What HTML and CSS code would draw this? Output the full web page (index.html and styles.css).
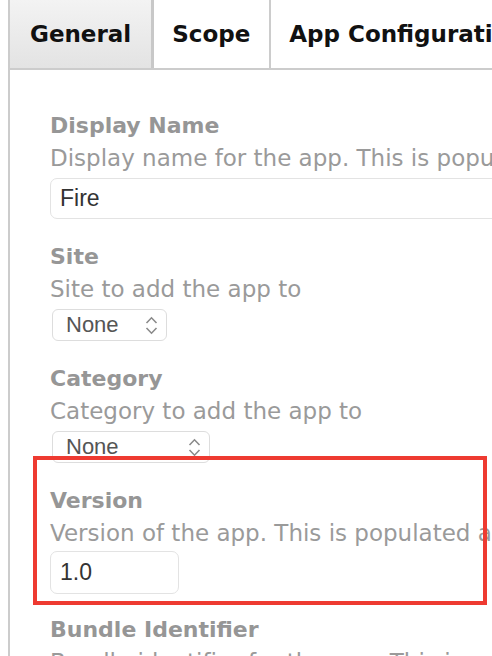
FILE: index.html
```html
<!DOCTYPE html>
<html lang="en">

  <head>
    <meta charset="UTF-8">
    <meta name="viewport" content="width=device-width, initial-scale=1.0">
    <title>App Settings</title>
    <link rel="stylesheet" href="styles.css">
  </head>

  <body>
    <div class="panel">
      <div class="tabs">
        <div class="tab active">General</div>
        <div class="tab">Scope</div>
        <div class="tab">App Configuration</div>
      </div>

      <div class="form">
        <div class="field">
          <div class="label">Display Name</div>
          <div class="help">Display name for the app. This is populated automatically from the package.</div>
          <div class="input wide">Fire</div>
        </div>

        <div class="field">
          <div class="label">Site</div>
          <div class="help">Site to add the app to</div>
          <div class="select site">
            <span>None</span>
            <svg width="13" height="19" viewBox="0 0 13 19"><path d="M1.5 7 L6.5 1.8 L11.5 7 M1.5 12 L6.5 17.2 L11.5 12" fill="none" stroke="#8a8a8a" stroke-width="1.6"/></svg>
          </div>
        </div>

        <div class="field">
          <div class="label">Category</div>
          <div class="help">Category to add the app to</div>
          <div class="select category">
            <span>None</span>
            <svg width="13" height="19" viewBox="0 0 13 19"><path d="M1.5 7 L6.5 1.8 L11.5 7 M1.5 12 L6.5 17.2 L11.5 12" fill="none" stroke="#8a8a8a" stroke-width="1.6"/></svg>
          </div>
        </div>

        <div class="field marked">
          <div class="highlight"></div>
          <div class="label">Version</div>
          <div class="help">Version of the app. This is populated automatically from the package.</div>
          <div class="input short">1.0</div>
        </div>

        <div class="field">
          <div class="label">Bundle Identifier</div>
          <div class="help">Bundle identifier for the app. This is populated automatically from the package.</div>
        </div>
      </div>
    </div>
  </body>

</html>
```

FILE: styles.css
```css
html,
body {
  margin: 0;
  overflow: hidden;
  background: #ffffff;
}

body {
  font-family: "DejaVu Sans", Verdana, sans-serif;
}

.panel {
  margin-left: 8px;
  border-left: 2px solid #cccccc;
  min-height: 656px;
}

.tabs {
  display: flex;
  height: 68px;
  border-bottom: 2px solid #cccccc;
  white-space: nowrap;
}

.tab {
  display: flex;
  align-items: center;
  padding: 0 19px 0 18px;
  font-size: 23px;
  font-weight: bold;
  color: #111111;
  border-right: 2px solid #cccccc;
}

.tab.active {
  padding: 0 20px;
  background: linear-gradient(#f3f3f3, #e3e3e3);
  border-right: 3px solid #c8c8c8;
}

.form {
  padding: 40px 0 0 40px;
}

.field {
  margin-bottom: 22px;
  white-space: nowrap;
}

.field.marked {
  position: relative;
  margin-bottom: 20px;
}

.highlight {
  position: absolute;
  left: -17px;
  top: -29px;
  width: 454px;
  bottom: -11px;
  border: 4px solid #ee3a31;
  box-sizing: border-box;
}

.label {
  font-size: 22px;
  line-height: 32px;
  font-weight: bold;
  color: #969696;
}

.help {
  font-size: 23px;
  line-height: 32px;
  color: #9a9a9a;
}

.input {
  margin-top: 4px;
  height: 41px;
  box-sizing: border-box;
  border: 1px solid #e3e3e3;
  border-radius: 7px;
  padding: 0 9px;
  display: flex;
  align-items: center;
  font-family: "Liberation Sans", Arial, sans-serif;
  font-size: 23px;
  color: #333333;
}

.input.wide {
  width: 470px;
}

.input.short {
  margin-top: 2px;
  width: 129px;
  height: 43px;
}

.select {
  margin-top: 4px;
  margin-left: 2px;
  height: 32px;
  box-sizing: border-box;
  border: 1px solid #dddddd;
  border-radius: 6px;
  display: flex;
  align-items: center;
  justify-content: space-between;
  padding: 0 8px 0 13px;
  font-family: "Liberation Sans", Arial, sans-serif;
  font-size: 22px;
  color: #555555;
}

.select.site {
  width: 115px;
}

.select.category {
  width: 158px;
}
```
